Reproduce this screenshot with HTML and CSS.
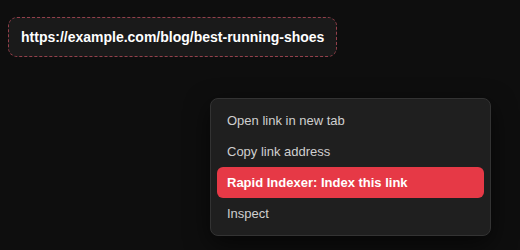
FILE: index.html
```html
<!DOCTYPE html>
<html lang="en">
<head>
    <meta charset="UTF-8">
    <meta name="viewport" content="width=device-width, initial-scale=1.0">
    <title>Context Menu</title>
    <link rel="stylesheet" href="styles.css">
</head>
<body>
    <div class="stage">
        <a class="link-box" href="#">https://example.com/blog/best-running-shoes</a>

        <ul class="context-menu">
            <li class="menu-item">Open link in new tab</li>
            <li class="menu-item">Copy link address</li>
            <li class="menu-item active">Rapid Indexer: Index this link</li>
            <li class="menu-item">Inspect</li>
        </ul>
    </div>
</body>
</html>
```

FILE: styles.css
```css
body {
    margin: 0;
    background: #0e0e0e;
    font-family: "Liberation Sans", Arial, sans-serif;
    color: #d0d0d0;
    height: 250px;
    overflow: hidden;
}

.stage {
    position: relative;
    height: 250px;
    padding: 17px 8px;
    box-sizing: border-box;
}

.link-box {
    display: inline-block;
    padding: 11px 12px 11px 12px;
    background-color: #1a1a1a;
    border: 1px dashed #94404b;
    border-radius: 9px;
    color: #ffffff;
    font-weight: bold;
    font-size: 14px;
    line-height: 16px;
    text-decoration: none;
}

.context-menu {
    position: absolute;
    left: 210px;
    top: 98px;
    width: 267px;
    margin: 0;
    padding: 6px;
    list-style: none;
    background-color: #1f1f1f;
    border: 1px solid #333333;
    border-radius: 8px;
    box-shadow: 0 8px 24px rgba(0, 0, 0, 0.6);
}

.menu-item {
    height: 31px;
    line-height: 31px;
    padding: 0 10px;
    font-size: 13px;
    color: #cfcfcf;
    border-radius: 6px;
}

.menu-item.active {
    background-color: #e63946;
    color: #ffffff;
    font-weight: bold;
}
```
